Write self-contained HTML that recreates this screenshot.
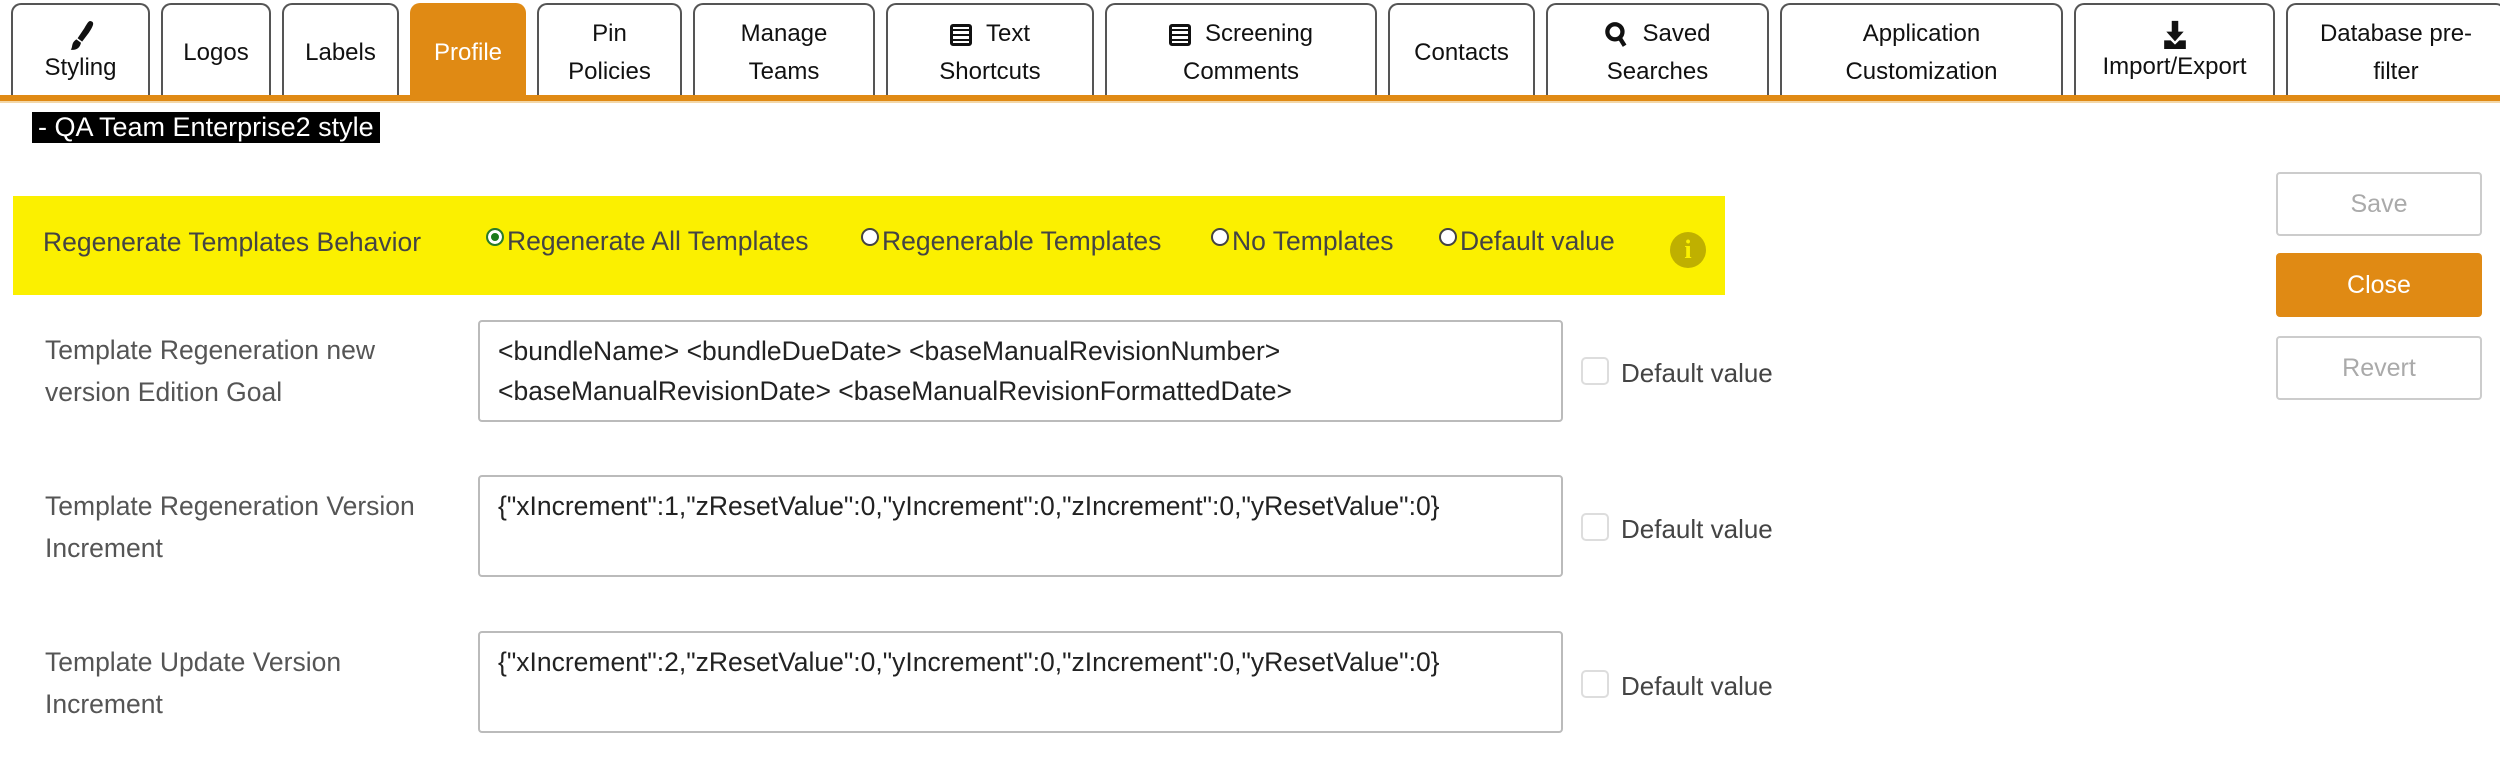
<!DOCTYPE html>
<html><head><meta charset="utf-8"><style>
*{box-sizing:border-box;margin:0;padding:0}
body{width:2500px;height:764px;background:#fff;font-family:"Liberation Sans",sans-serif;position:relative;overflow:hidden;color:#333}
.tab{position:absolute;top:3px;height:94px;border:2px solid #555;border-bottom:none;border-radius:10px 10px 0 0;background:#fff;color:#111;font-size:24px;text-align:center;display:flex;flex-direction:column;justify-content:center;line-height:38px;padding-top:4px}
.tab.act{background:#e08a14;border-color:#e08a14;color:#fff}
.bar{position:absolute;left:0;top:95px;width:2500px;height:6px;background:#e08a14}
.bar2{position:absolute;left:0;top:101px;width:2500px;height:2px;background:#f3d7a8}
.abs{position:absolute}
.lbl{font-size:26.5px;color:#555;line-height:42px}
.ta{position:absolute;left:478px;width:1085px;height:102px;border:2px solid #bbb;border-radius:4px;font-size:26.5px;color:#222;padding:9px 18px;line-height:40px;overflow:hidden;white-space:nowrap}
.cb{position:absolute;left:1581px;width:28px;height:28px;border:2px solid #ddd;border-radius:5px}
.dv{position:absolute;left:1621px;font-size:26px;color:#444}
.btn{position:absolute;left:2276px;width:206px;height:64px;border:2px solid #ccc;border-radius:4px;font-size:25px;color:#aaa;text-align:center;line-height:60px}
.radio{display:inline-block;width:18px;height:18px;border:2px solid #444;border-radius:50%;vertical-align:top;margin-top:2px;margin-right:3px;background:#fff}
.ro{font-size:26.5px;color:#444;top:226px}
</style></head><body>
<div class="tab" style="left:11px;width:139px"><svg width="30" height="34" viewBox="0 0 26 30" style="margin:0 auto -4px"><path d="M22 2 C25 3 24 6 20 12 L14 20 L10 17 L16 8 C19 3 20 1 22 2Z M9 18 L13 21 C12 26 8 28 4 27 C6 25 4 21 9 18Z" fill="#111"/></svg>Styling</div>
<div class="tab" style="left:161px;width:110px">Logos</div>
<div class="tab" style="left:282px;width:117px">Labels</div>
<div class="tab act" style="left:410px;width:116px">Profile</div>
<div class="tab" style="left:537px;width:145px">Pin<br>Policies</div>
<div class="tab" style="left:693px;width:182px">Manage<br>Teams</div>
<div class="tab" style="left:886px;width:208px"><div><span style="display:inline-block;width:22px;height:22px;border:3px solid #111;border-radius:3px;vertical-align:middle;margin-right:14px;background:repeating-linear-gradient(#fff 0 2px,#111 2px 4px,#fff 4px 5px)"></span>Text</div>Shortcuts</div>
<div class="tab" style="left:1105px;width:272px"><div><span style="display:inline-block;width:22px;height:22px;border:3px solid #111;border-radius:3px;vertical-align:middle;margin-right:14px;background:repeating-linear-gradient(#fff 0 2px,#111 2px 4px,#fff 4px 5px)"></span>Screening</div>Comments</div>
<div class="tab" style="left:1388px;width:147px">Contacts</div>
<div class="tab" style="left:1546px;width:223px"><div><svg width="24" height="28" viewBox="0 0 22 26" style="vertical-align:middle;margin-right:14px"><circle cx="10" cy="10" r="7" fill="none" stroke="#111" stroke-width="4"/><path d="M14 15 L19 23" stroke="#111" stroke-width="4"/></svg>Saved</div>Searches</div>
<div class="tab" style="left:1780px;width:283px">Application<br>Customization</div>
<div class="tab" style="left:2074px;width:201px"><svg width="26" height="32" viewBox="0 0 24 28" style="margin:0 auto -4px"><path d="M9 0h6v10h5l-8 9-8-9h5z M2 18h6l4 4 4-4h6v8H2z" fill="#111"/></svg>Import/Export</div>
<div class="tab" style="left:2286px;width:220px">Database pre-<br>filter</div>
<div class="bar"></div><div class="bar2"></div>

<div class="abs" style="left:32px;top:112px;height:31px;background:#000;color:#fff;font-size:27px;line-height:31px;padding:0 6px">- QA Team Enterprise2 style</div>

<div class="abs" style="left:13px;top:196px;width:1712px;height:99px;background:#fbf000"></div>
<div class="abs lbl" style="left:43px;top:221px;color:#444">Regenerate Templates Behavior</div>
<div class="abs ro" style="left:486px"><span class="radio" style="border-color:#2a7a2a;box-shadow:inset 0 0 0 3px #fff;background:#1a7a1a"></span>Regenerate All Templates</div>
<div class="abs ro" style="left:861px"><span class="radio"></span>Regenerable Templates</div>
<div class="abs ro" style="left:1211px"><span class="radio"></span>No Templates</div>
<div class="abs ro" style="left:1439px"><span class="radio"></span>Default value</div>
<div class="abs" style="left:1670px;top:232px;width:36px;height:36px;border-radius:50%;background:#bfb000;color:#fbf000;font:bold 26px 'Liberation Serif',serif;text-align:center;line-height:36px">i</div>

<div class="abs lbl" style="left:45px;top:329px">Template Regeneration new<br>version Edition Goal</div>
<div class="ta" style="top:320px">&lt;bundleName&gt; &lt;bundleDueDate&gt; &lt;baseManualRevisionNumber&gt;<br>&lt;baseManualRevisionDate&gt; &lt;baseManualRevisionFormattedDate&gt;<br>&lt;screeningManualRevisionNumber&gt; &lt;screeningManualRevisionDate&gt;</div>
<div class="cb" style="top:357px"></div><div class="dv" style="top:358px">Default value</div>

<div class="abs lbl" style="left:45px;top:485px">Template Regeneration Version<br>Increment</div>
<div class="ta" style="top:475px">{"xIncrement":1,"zResetValue":0,"yIncrement":0,"zIncrement":0,"yResetValue":0}</div>
<div class="cb" style="top:513px"></div><div class="dv" style="top:514px">Default value</div>

<div class="abs lbl" style="left:45px;top:641px">Template Update Version<br>Increment</div>
<div class="ta" style="top:631px">{"xIncrement":2,"zResetValue":0,"yIncrement":0,"zIncrement":0,"yResetValue":0}</div>
<div class="cb" style="top:670px"></div><div class="dv" style="top:671px">Default value</div>

<div class="btn" style="top:172px">Save</div>
<div class="btn" style="top:253px;background:#e08a14;border-color:#e08a14;color:#fff">Close</div>
<div class="btn" style="top:336px">Revert</div>
</body></html>
